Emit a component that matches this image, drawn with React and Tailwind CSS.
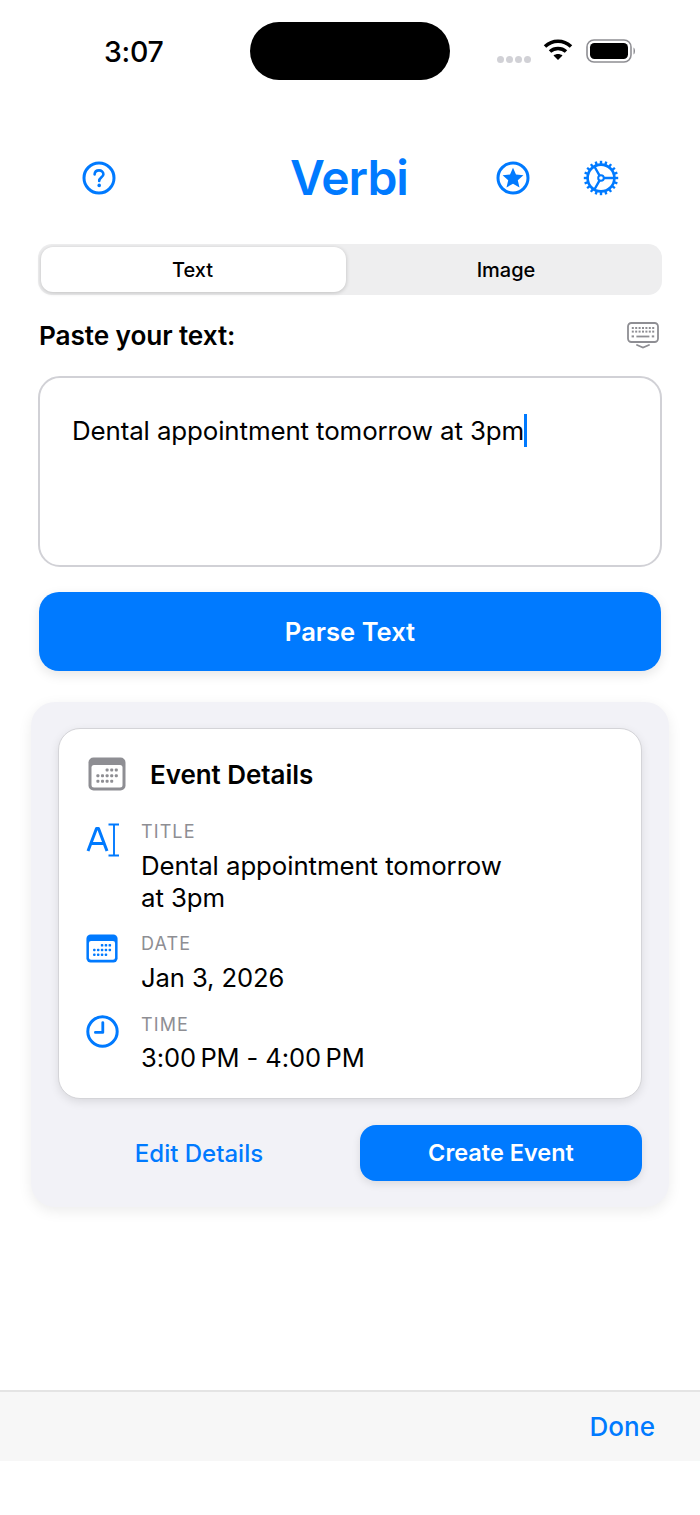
import React from "react";

const Blue = "#007aff";

function Wifi() {
  return (
    <svg width="30" height="23" viewBox="0 0 30 23" fill="none" stroke="#000" strokeWidth="3.6">
      <path d="M2 8.5 C9.5 1.5 20.5 1.5 28 8.5" />
      <path d="M7 13.5 C11.5 9.5 18.5 9.5 23 13.5" />
      <path d="M15 22 L10.5 17.5 C13 15.5 17 15.5 19.5 17.5 Z" fill="#000" stroke="none" />
    </svg>
  );
}

function Battery() {
  return (
    <svg width="50" height="24" viewBox="0 0 50 24">
      <rect x="1" y="1" width="44" height="22" rx="7" fill="none" stroke="#8e8e93" strokeWidth="1.6" />
      <rect x="4" y="4" width="38" height="16" rx="4.5" fill="#000" />
      <path d="M47.5 8.5 C49.5 9.5 49.5 14.5 47.5 15.5 Z" fill="#8e8e93" />
    </svg>
  );
}

function Help() {
  return (
    <svg width="34" height="34" viewBox="0 0 34 34" fill="none">
      <circle cx="17" cy="17" r="15" stroke={Blue} strokeWidth="3" />
      <path d="M12.6 13.4 C12.8 10.6 14.7 9.4 17 9.4 C19.5 9.4 21.4 10.9 21.4 13.2 C21.4 16.3 17.2 16.4 17.2 20" stroke={Blue} strokeWidth="2.6" strokeLinecap="round" />
      <circle cx="17.2" cy="24.4" r="1.8" fill={Blue} />
    </svg>
  );
}

function StarCircle() {
  return (
    <svg width="34" height="34" viewBox="0 0 34 34" fill="none">
      <circle cx="17" cy="17" r="15" stroke={Blue} strokeWidth="3" />
      <path d="M17 6.8 L20 13.6 L27.4 14.3 L21.8 19.2 L23.5 26.4 L17 22.7 L10.5 26.4 L12.2 19.2 L6.6 14.3 L14 13.6 Z" fill={Blue} />
    </svg>
  );
}

function Gear() {
  const teeth = Array.from({ length: 20 }, (_, i) => (i * 360) / 20);
  return (
    <svg width="36" height="36" viewBox="0 0 36 36" fill="none">
      {teeth.map((a) => (
        <rect key={a} x="16.8" y="0.8" width="2.4" height="4.4" fill={Blue} transform={`rotate(${a} 18 18)`} />
      ))}
      <circle cx="18" cy="18" r="13.4" stroke={Blue} strokeWidth="2.6" />
      <circle cx="18" cy="18" r="2.8" stroke={Blue} strokeWidth="2" />
      <path d="M20.8 18 H31 M16.6 15.6 L11.4 6.5 M16.6 20.4 L11.4 29.5" stroke={Blue} strokeWidth="2.4" />
    </svg>
  );
}

function KeyboardIcon() {
  const dots = [];
  for (let r = 0; r < 2; r++) for (let c = 0; c < 7; c++) dots.push([5.8 + c * 3.4, 6 + r * 3.6]);
  return (
    <svg width="32" height="27" viewBox="0 0 32 27" fill="none">
      <rect x="1" y="1" width="30" height="19" rx="3.4" stroke="#8e8e93" strokeWidth="1.8" />
      {dots.map(([x, y]) => (
        <rect key={`${x}-${y}`} x={x - 1} y={y - 1} width="2" height="2" fill="#8e8e93" />
      ))}
      <rect x="4.6" y="13.4" width="2.4" height="2" fill="#8e8e93" />
      <rect x="9.4" y="13.6" width="13" height="1.8" fill="#8e8e93" />
      <rect x="24.8" y="13.4" width="2.4" height="2" fill="#8e8e93" />
      <path d="M10 23 L16 25.6 L22 23" stroke="#8e8e93" strokeWidth="1.8" strokeLinecap="round" />
    </svg>
  );
}

function CalendarIcon({ color, w, h }) {
  const cells = [
    [0, 2], [0, 3], [0, 4],
    [1, 0], [1, 1], [1, 2], [1, 3], [1, 4],
    [2, 0], [2, 1], [2, 2], [2, 3],
  ];
  return (
    <svg width={w} height={h} viewBox="0 0 38 34">
      <rect x="0.5" y="0.5" width="37" height="33" rx="5" fill={color} />
      <rect x="3.5" y="8" width="31" height="22.5" rx="2.5" fill="#fff" />
      {cells.map(([r, c]) => (
        <rect key={`${r}${c}`} x={8.4 + c * 4.6} y={11.6 + r * 5.6} width="3" height="3" rx="1" fill={color} />
      ))}
    </svg>
  );
}

function TextFormatIcon() {
  return (
    <svg width="34" height="34" viewBox="0 0 34 34" fill="none" stroke={Blue}>
      <path d="M2 28 L10.5 5.5 L12.5 5.5 L21 28 M5.4 20.4 H17.6" strokeWidth="3" strokeLinejoin="round" />
      <path d="M28 1.5 V32.5 M22.5 1.5 H33 M22.5 32.5 H33" strokeWidth="1.9" />
    </svg>
  );
}

function ClockIcon() {
  return (
    <svg width="33" height="33" viewBox="0 0 33 33" fill="none">
      <circle cx="16.5" cy="16.5" r="14.7" stroke={Blue} strokeWidth="3" />
      <path d="M16.8 7.6 V17.4 H9.4" stroke={Blue} strokeWidth="2.8" strokeLinecap="round" strokeLinejoin="round" />
    </svg>
  );
}

function Field({ icon, iconClass, label, className, children }) {
  return (
    <div className={`flex ${className}`}>
      <div className={`w-[82px] shrink-0 pl-[27px] ${iconClass}`}>{icon}</div>
      <div className="min-w-0">
        <div className="text-[18px] leading-[22px] tracking-[1.1px] text-[#8e8e93]">{label}</div>
        {children}
      </div>
    </div>
  );
}

export default function App() {
  return (
    <div className="relative h-[1515px] w-[700px] overflow-hidden bg-white font-['Inter',sans-serif] text-black">
      <div className="flex h-[104px] items-start">
        <div className="w-[250px] pl-[104px] pt-[34px] text-[28.5px] font-medium leading-[36px] tracking-[-0.3px]">3:07</div>
        <div className="mt-[22px] h-[58px] w-[200px] rounded-[29px] bg-black" />
        <div className="flex flex-1 items-center pl-[47px] pt-[39px]">
          <div className="mt-[17px] flex gap-[2px]">
            <span className="size-[7px] rounded-full bg-[#d1d1d6]" />
            <span className="size-[7px] rounded-full bg-[#d1d1d6]" />
            <span className="size-[7px] rounded-full bg-[#d1d1d6]" />
            <span className="size-[7px] rounded-full bg-[#d1d1d6]" />
          </div>
          <div className="ml-[12px] -mt-[3px]"><Wifi /></div>
          <div className="ml-[13px]"><Battery /></div>
        </div>
      </div>

      <header className="mt-[46px] flex h-[56px] items-center">
        <div className="w-[246px] pl-[82px]"><Help /></div>
        <div className="w-[206px] text-center text-[48px] font-semibold leading-[56px] tracking-[-1px] text-[#007aff]">Verbi</div>
        <div className="pl-[44px]"><StarCircle /></div>
        <div className="pl-[53px]"><Gear /></div>
      </header>

      <main className="px-[38px]">
        <div className="mt-[38px] flex h-[51px] items-center rounded-[14px] bg-[#eeeeef] p-[3px]">
          <div className="flex h-[45px] w-[305px] items-center justify-center rounded-[12px] bg-white pr-[2px] text-[20px] font-medium shadow-[0_1px_4px_rgba(0,0,0,0.2)]">Text</div>
          <div className="flex-1 pl-[7px] text-center text-[20px] font-medium">Image</div>
        </div>

        <div className="mt-[25px] flex h-[32px] items-center justify-between pl-[1px] pr-[3px]">
          <div className="text-[26.2px] font-semibold leading-[32px] tracking-[-0.1px]">Paste your text:</div>
          <div className="-mt-[1px]"><KeyboardIcon /></div>
        </div>

        <div className="mt-[24px] h-[191px] rounded-[22px] border-2 border-[#d1d1d6] pl-[32px] pt-[35px] text-[25.9px] leading-[36px] tracking-[-0.12px]">
          Dental appointment tomorrow at 3pm
          <span className="ml-[0px] inline-block h-[33px] w-[3px] align-[-7px] bg-[#007aff]" />
        </div>

        <div className="mx-[1px] mt-[25px] flex h-[79px] items-center justify-center rounded-[20px] bg-[#007aff] pt-[2px] text-[25.6px] font-semibold text-white shadow-[0_4px_12px_rgba(0,0,0,0.1)]">Parse Text</div>
      </main>

      <section className="mx-[31px] mt-[31px] h-[505px] rounded-[24px] bg-[#f2f2f7] px-[27px] pt-[26px] shadow-[0_4px_14px_rgba(0,0,0,0.08)]">
        <div className="h-[371px] rounded-[22px] border border-[#d4d4d8] bg-white shadow-[0_3px_10px_rgba(0,0,0,0.1)]">
          <div className="mt-[28px] flex h-[34px] items-center pl-[29px]">
            <CalendarIcon color="#8e8e93" w={38} h={34} />
            <div className="ml-[24px] text-[26px] font-semibold tracking-[-0.05px]">Event Details</div>
          </div>
          <Field className="mt-[30px]" iconClass="pt-[2px]" icon={<TextFormatIcon />} label="TITLE">
            <div className="mt-[7px] w-[375px] text-[25.8px] leading-[32px] tracking-[-0.07px]">Dental appointment tomorrow at 3pm</div>
          </Field>
          <Field className="mt-[19px]" iconClass="pt-[1px]" icon={<CalendarIcon color={Blue} w={32} h={29} />} label="DATE">
            <div className="mt-[7px] text-[25.6px] leading-[32px] tracking-[-0.1px]">Jan 3, 2026</div>
          </Field>
          <Field className="mt-[20px]" iconClass="pt-[1px]" icon={<ClockIcon />} label="TIME">
            <div className="mt-[6px] text-[25.5px] leading-[32px] tracking-[-0.1px]">3:00{"\u202F"}PM - 4:00{"\u202F"}PM</div>
          </Field>
        </div>
        <div className="mt-[26px] grid h-[56px] grid-cols-2 items-center gap-[20px]">
          <div className="pt-[2px] text-center text-[24px] font-medium text-[#007aff]">Edit Details</div>
          <div className="flex h-[56px] items-center justify-center rounded-[16px] bg-[#007aff] text-[23.5px] font-semibold text-white shadow-[0_3px_8px_rgba(0,0,0,0.1)]">Create Event</div>
        </div>
      </section>

      <footer className="mt-[183px] flex h-[71px] items-center justify-end border-t-2 border-[#e4e4e4] bg-[#f7f7f7] pr-[45px] text-[26px] font-medium text-[#007aff]">Done</footer>
    </div>
  );
}
